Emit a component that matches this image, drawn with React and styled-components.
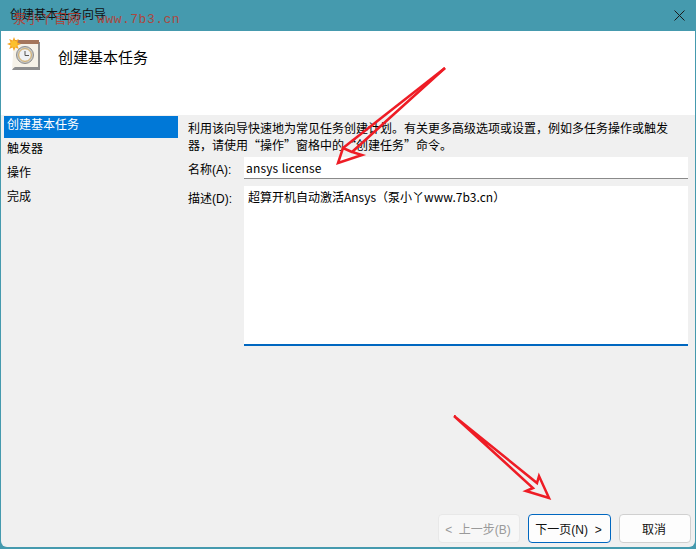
import React from "react";
import styled, { createGlobalStyle } from "styled-components";

const FONT = `"Liberation Sans", "Noto Sans CJK SC", sans-serif`;
const CJK_FONT = `"Noto Sans CJK SC", sans-serif`;

const Global = createGlobalStyle`
  html, body {
    margin: 0;
    padding: 0;
    background: #459aae;
  }
  * {
    box-sizing: border-box;
  }
`;

const Win = styled.div`
  position: relative;
  width: 696px;
  height: 549px;
  display: flex;
  flex-direction: column;
  overflow: hidden;
  background: #459aae;
  font-family: ${FONT};
  color: #000;
`;

const TitleBar = styled.div`
  height: 31px;
  flex: none;
  display: flex;
  align-items: center;
  justify-content: space-between;
  padding: 0 11px 1px 10px;
`;

const TitleText = styled.div`
  font-size: 12px;
  line-height: 16px;
  color: #111;
`;

const Watermark = styled.div`
  position: absolute;
  left: 13px;
  top: 11px;
  font-family: "Liberation Mono", "Noto Sans CJK SC", monospace;
  font-size: 13px;
  line-height: 18px;
  letter-spacing: 0.5px;
  color: #c0392b;
  opacity: 0.85;
  white-space: pre;
`;

const Close = styled.svg`
  width: 11px;
  height: 11px;
`;

const Client = styled.div`
  flex: 1;
  margin: 0 1px 2px;
  display: flex;
  flex-direction: column;
  border-radius: 0 0 6px 6px;
  overflow: hidden;
  background: #f0f0f0;
`;

const Header = styled.div`
  height: 84px;
  flex: none;
  background: #fff;
  display: flex;
  align-items: flex-start;
  padding: 6px 0 0 6px;
`;

const HeaderIcon = styled.svg`
  width: 34px;
  height: 34px;
  flex: none;
`;

const HeaderTitle = styled.div`
  margin: 11px 0 0 17px;
  font-size: 15px;
  line-height: 20px;
`;

const Body = styled.div`
  flex: 1;
  display: flex;
  min-height: 0;
`;

const Side = styled.div`
  width: 187px;
  flex: none;
  padding: 1px 10px 0 3px;
  display: flex;
  flex-direction: column;
  gap: 2px;
`;

const SideItem = styled.div`
  height: 22px;
  padding-left: 3px;
  font-size: 12px;
  line-height: 18px;
  background: ${(p) => (p.$active ? "#0078d7" : "transparent")};
  color: ${(p) => (p.$active ? "#fff" : "#000")};
`;

const Main = styled.div`
  flex: 1;
  min-width: 0;
  display: flex;
  flex-direction: column;
`;

const Intro = styled.div`
  font-family: ${CJK_FONT};
  font-size: 12px;
  line-height: 17px;
  padding-top: 4px;
  height: 42px;
  white-space: nowrap;
`;

const FormRow = styled.div`
  display: flex;
  align-items: flex-start;
  margin-bottom: ${(p) => p.$gap || 0}px;
`;

const FieldLabel = styled.label`
  width: 56px;
  flex: none;
  font-size: 12px;
  line-height: 16px;
  padding-top: ${(p) => p.$top}px;
`;

const NameBox = styled.div`
  width: 444px;
  height: 22px;
  background: #fff;
  border-bottom: 1px solid #8a8a8a;
  padding-left: 2px;
  font-family: ${CJK_FONT};
  font-size: 12px;
  line-height: 22px;
  letter-spacing: 0.15px;
  word-spacing: 0.5px;
`;

const DescBox = styled.div`
  width: 444px;
  height: 160px;
  background: #fff;
  border-bottom: 2px solid #0067c0;
  padding: 2px 0 0 4px;
  font-family: ${CJK_FONT};
  font-size: 12px;
  line-height: 18px;
`;

const Footer = styled.div`
  margin-top: auto;
  display: flex;
  justify-content: flex-end;
  gap: 8px;
  padding: 0 4px 4px 0;
`;

const Btn = styled.div`
  width: ${(p) => p.$w}px;
  height: 29px;
  display: flex;
  align-items: center;
  justify-content: center;
  padding-right: 2px;
  border-radius: 4px;
  font-size: 12px;
  white-space: pre;
  background: ${(p) => (p.$disabled ? "#f7f7f7" : "#fdfdfd")};
  color: ${(p) => (p.$disabled ? "#9a9a9a" : "#111")};
  border: 1px solid
    ${(p) => (p.$primary ? "#0067c0" : p.$disabled ? "#e8e8e8" : "#d0d0d0")};
`;

const Overlay = styled.svg`
  position: absolute;
  left: 0;
  top: 0;
  width: 696px;
  height: 549px;
  pointer-events: none;
`;

const ClockIcon = () => (
  <HeaderIcon viewBox="0 0 34 34">
    <path d="M7 5h26v28H5l2-3z" fill="#8f8f8f" />
    <path d="M7 4h24v26H8l-3 2z" fill="#f6f2e8" />
    <rect x="8" y="3" width="24" height="4" fill="#a5765c" />
    <circle cx="18" cy="18" r="8.5" fill="#c9c9c4" stroke="#8d8d8d" />
    <circle cx="18" cy="18" r="6.3" fill="#eef1f4" stroke="#d2a85a" />
    <path d="M18 14V18.5H22" fill="none" stroke="#555" strokeWidth="1" />
    <path
      d="M7 0l1.4 3.4 3.4-1.4-1.4 3.4L14 7l-3.6 1.6 1.4 3.4-3.4-1.4L7 14l-1.4-3.4L2.200 12l1.400-3.400L0 7l3.600-1.600L2.200 2l3.400 1.400z"
      fill="#f5a623"
    />
    <circle cx="7" cy="7" r="3.3" fill="#fbc02d" />
  </HeaderIcon>
);

export default function App() {
  return (
    <>
      <Global />
      <Win>
        <TitleBar>
          <TitleText>创建基本任务向导</TitleText>
          <Close viewBox="0 0 11 11">
            <path d="M.5.5l10 10M10.5.5l-10 10" stroke="#1a1a1a" fill="none" />
          </Close>
        </TitleBar>
        <Watermark>泵小丫官网: www.7b3.cn</Watermark>
        <Client>
          <Header>
            <ClockIcon />
            <HeaderTitle>创建基本任务</HeaderTitle>
          </Header>
          <Body>
            <Side>
              <SideItem $active>创建基本任务</SideItem>
              <SideItem>触发器</SideItem>
              <SideItem>操作</SideItem>
              <SideItem>完成</SideItem>
            </Side>
            <Main>
              <Intro>
                利用该向导快速地为常见任务创建计划。有关更多高级选项或设置，例如多任务操作或触发
                <br />
                器，请使用“操作”窗格中的“创建任务”命令。
              </Intro>
              <FormRow $gap={7}>
                <FieldLabel $top={5}>名称(A):</FieldLabel>
                <NameBox>ansys license</NameBox>
              </FormRow>
              <FormRow>
                <FieldLabel $top={5}>描述(D):</FieldLabel>
                <DescBox>超算开机自动激活Ansys（泵小丫www.7b3.cn）</DescBox>
              </FormRow>
              <Footer>
                <Btn $w={82} $disabled>{"<  上一步(B)"}</Btn>
                <Btn $w={83} $primary>{"下一页(N)  >"}</Btn>
                <Btn $w={72}>取消</Btn>
              </Footer>
            </Main>
          </Body>
        </Client>
        <Overlay viewBox="0 0 696 549">
          <g fill="none" stroke="#ee1c25" strokeWidth="2.5" strokeLinejoin="miter">
            <path d="M445 68L352 152L362 155L338 163L343 148L352 152" />
            <path d="M445 68L343 148" />
            <path d="M454 416L533 488L526 491L549 498L539 476L537 483Z" />
          </g>
        </Overlay>
      </Win>
    </>
  );
}
